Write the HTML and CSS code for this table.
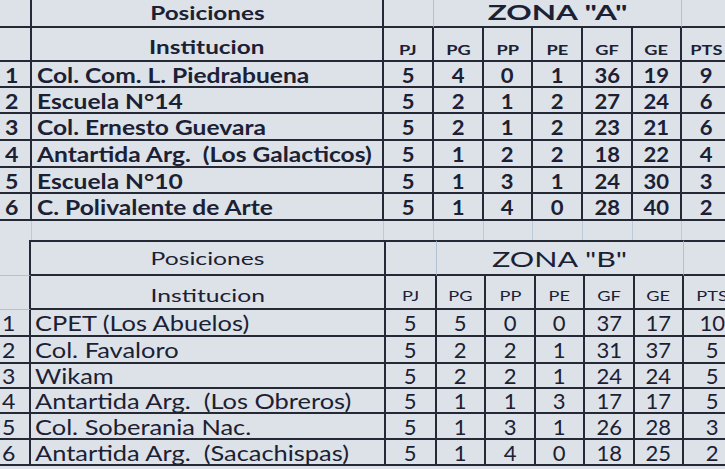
FILE: index.html
```html
<!DOCTYPE html>
<html lang="es">
<head>
<meta charset="utf-8">
<title>Posiciones</title>
<link rel="stylesheet" href="styles.css">
</head>
<body>
<div class="sheet">
  <div class="tbl top">
    <div class="c rank"></div>
    <div class="c title"><span>Posiciones</span></div>
    <div class="c soft"></div>
    <div class="c zona"><span>ZONA "A"</span></div>
    <div class="c last"></div>

    <div class="c rank"></div>
    <div class="c title head"><span>Institucion</span></div>
    <div class="c h"><span>PJ</span></div><div class="c h"><span>PG</span></div><div class="c h"><span>PP</span></div><div class="c h"><span>PE</span></div><div class="c h"><span>GF</span></div><div class="c h"><span>GE</span></div><div class="c h last"><span>PTS</span></div>

    <div class="c rank"><span>1</span></div><div class="c name"><span>Col. Com. L. Piedrabuena</span></div>
    <div class="c n"><span>5</span></div><div class="c n"><span>4</span></div><div class="c n"><span>0</span></div><div class="c n"><span>1</span></div><div class="c n"><span>36</span></div><div class="c n"><span>19</span></div><div class="c n last"><span>9</span></div>

    <div class="c rank"><span>2</span></div><div class="c name"><span>Escuela N°14</span></div>
    <div class="c n"><span>5</span></div><div class="c n"><span>2</span></div><div class="c n"><span>1</span></div><div class="c n"><span>2</span></div><div class="c n"><span>27</span></div><div class="c n"><span>24</span></div><div class="c n last"><span>6</span></div>

    <div class="c rank"><span>3</span></div><div class="c name"><span>Col. Ernesto Guevara</span></div>
    <div class="c n"><span>5</span></div><div class="c n"><span>2</span></div><div class="c n"><span>1</span></div><div class="c n"><span>2</span></div><div class="c n"><span>23</span></div><div class="c n"><span>21</span></div><div class="c n last"><span>6</span></div>

    <div class="c rank"><span>4</span></div><div class="c name"><span>Antartida Arg.  (Los Galacticos)</span></div>
    <div class="c n"><span>5</span></div><div class="c n"><span>1</span></div><div class="c n"><span>2</span></div><div class="c n"><span>2</span></div><div class="c n"><span>18</span></div><div class="c n"><span>22</span></div><div class="c n last"><span>4</span></div>

    <div class="c rank"><span>5</span></div><div class="c name"><span>Escuela N°10</span></div>
    <div class="c n"><span>5</span></div><div class="c n"><span>1</span></div><div class="c n"><span>3</span></div><div class="c n"><span>1</span></div><div class="c n"><span>24</span></div><div class="c n"><span>30</span></div><div class="c n last"><span>3</span></div>

    <div class="c rank"><span>6</span></div><div class="c name"><span>C. Polivalente de Arte</span></div>
    <div class="c n"><span>5</span></div><div class="c n"><span>1</span></div><div class="c n"><span>4</span></div><div class="c n"><span>0</span></div><div class="c n"><span>28</span></div><div class="c n"><span>40</span></div><div class="c n last"><span>2</span></div>
  </div>

  <div class="gap">
    <div class="g"></div><div class="g"></div><div class="g"></div><div class="g"></div><div class="g"></div><div class="g"></div><div class="g"></div><div class="g"></div><div class="g"></div>
  </div>

  <div class="tbl bottom">
    <div class="c rank open"></div>
    <div class="c title topb"><span>Posiciones</span></div>
    <div class="c soft topb"></div>
    <div class="c zona topb"><span>ZONA "B"</span></div>
    <div class="c last topb"></div>

    <div class="c rank open"></div>
    <div class="c title head"><span>Institucion</span></div>
    <div class="c h"><span>PJ</span></div><div class="c h"><span>PG</span></div><div class="c h"><span>PP</span></div><div class="c h"><span>PE</span></div><div class="c h"><span>GF</span></div><div class="c h"><span>GE</span></div><div class="c h last"><span>PTS</span></div>

    <div class="c rank"><span>1</span></div><div class="c name"><span>CPET (Los Abuelos)</span></div>
    <div class="c n"><span>5</span></div><div class="c n"><span>5</span></div><div class="c n"><span>0</span></div><div class="c n"><span>0</span></div><div class="c n"><span>37</span></div><div class="c n"><span>17</span></div><div class="c n last"><span>10</span></div>

    <div class="c rank"><span>2</span></div><div class="c name"><span>Col. Favaloro</span></div>
    <div class="c n"><span>5</span></div><div class="c n"><span>2</span></div><div class="c n"><span>2</span></div><div class="c n"><span>1</span></div><div class="c n"><span>31</span></div><div class="c n"><span>37</span></div><div class="c n last"><span>5</span></div>

    <div class="c rank"><span>3</span></div><div class="c name"><span>Wikam</span></div>
    <div class="c n"><span>5</span></div><div class="c n"><span>2</span></div><div class="c n"><span>2</span></div><div class="c n"><span>1</span></div><div class="c n"><span>24</span></div><div class="c n"><span>24</span></div><div class="c n last"><span>5</span></div>

    <div class="c rank"><span>4</span></div><div class="c name"><span>Antartida Arg.  (Los Obreros)</span></div>
    <div class="c n"><span>5</span></div><div class="c n"><span>1</span></div><div class="c n"><span>1</span></div><div class="c n"><span>3</span></div><div class="c n"><span>17</span></div><div class="c n"><span>17</span></div><div class="c n last"><span>5</span></div>

    <div class="c rank"><span>5</span></div><div class="c name"><span>Col. Soberania Nac.</span></div>
    <div class="c n"><span>5</span></div><div class="c n"><span>1</span></div><div class="c n"><span>3</span></div><div class="c n"><span>1</span></div><div class="c n"><span>26</span></div><div class="c n"><span>28</span></div><div class="c n last"><span>3</span></div>

    <div class="c rank"><span>6</span></div><div class="c name"><span>Antartida Arg.  (Sacachispas)</span></div>
    <div class="c n"><span>5</span></div><div class="c n"><span>1</span></div><div class="c n"><span>4</span></div><div class="c n"><span>0</span></div><div class="c n"><span>18</span></div><div class="c n"><span>25</span></div><div class="c n last"><span>2</span></div>
  </div>
</div>
</body>
</html>
```

FILE: styles.css
```css
html, body {
  margin: 0;
  padding: 0;
}
body {
  background: #dce2e7;
  color: #1b2034;
  font-family: Lato, "Liberation Sans", sans-serif;
  width: 725px;
  height: 469px;
  overflow: hidden;
}
.sheet {
  width: 725px;
  height: 469px;
  overflow: hidden;
}
.tbl {
  display: grid;
}
.top {
  grid-template-columns: 32px 352px 50px 50px 49px 50px 50px 49px 48px;
  grid-template-rows: 28px 34px 26px 26px 27px 27px 26px 27px;
  font-weight: 700;
}
.bottom {
  grid-template-columns: 31px 355px 51px 49px 50px 49px 50px 49px 56px;
  grid-template-rows: 36px 34px 27px 27px 25px 25px 26px 26px;
  font-weight: 400;
}
.c {
  box-sizing: border-box;
  border-right: 2px solid #242935;
  border-bottom: 2px solid #242935;
  display: flex;
  align-items: center;
  justify-content: center;
  white-space: pre;
  font-size: 21px;
  line-height: 1;
}
.c > span {
  display: inline-block;
  transform-origin: center center;
}
.c.last {
  border-right: none;
}
.c.soft {
  border-right: 1px solid #b3c2d1;
}
.topb {
  border-top: 2px solid #242935;
}

/* section headers */
.zona {
  grid-column: span 5;
  border-right: 1px solid #b3c2d1;
  font-size: 21px;
  font-weight: 700;
}
.top .zona {
  padding-bottom: 3px;
}
.zona > span {
  transform: scaleX(1.5);
}
.bottom .zona {
  font-weight: 400;
}
.bottom .zona > span {
  transform: scaleX(1.45);
}
.title {
  font-size: 18px;
  font-weight: 700;
}
.title > span {
  transform: scaleX(1.35);
}
.bottom .title {
  font-weight: 400;
}
.bottom .title > span {
  transform: scaleX(1.37);
}
.head {
  padding-top: 6px;
}
.h {
  font-size: 14px;
  font-weight: 700;
  padding-top: 11px;
}
.h > span {
  transform: scaleX(1.3);
}
.bottom .h {
  font-weight: 400;
  padding-top: 8px;
}

/* body cells */
.rank {
  justify-content: flex-start;
  padding-left: 5px;
}
.rank > span {
  transform-origin: left center;
  transform: scaleX(1.1);
}
.bottom .rank {
  padding-left: 2px;
}
.rank.open {
  border-bottom: 1px solid #b3c2d1;
}
.name {
  justify-content: flex-start;
  padding-left: 5px;
}
.name > span {
  transform-origin: left center;
  transform: scaleX(1.17);
}
.bottom .name {
  padding-left: 4px;
}
.bottom .name > span {
  transform: scaleX(1.21);
}
.n > span {
  transform: scaleX(1.05);
}

/* empty spacer row */
.gap {
  display: grid;
  grid-template-columns: 32px 352px 50px 50px 49px 50px 50px 49px 48px;
  height: 19px;
}
.g {
  border-right: 1px solid #bccad7;
}
```
